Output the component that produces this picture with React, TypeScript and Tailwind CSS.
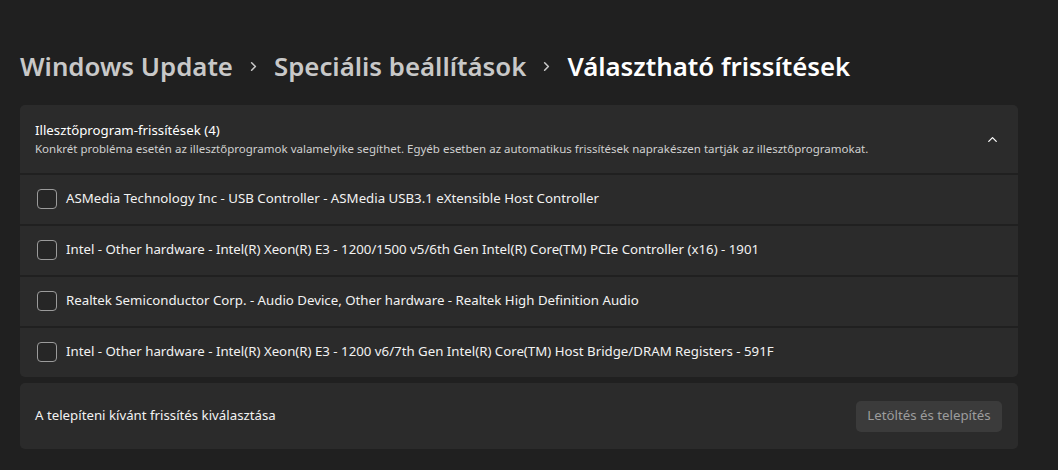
import { ChevronUp, ChevronRight } from "lucide-react";

const drivers = [
  "ASMedia Technology Inc - USB Controller - ASMedia USB3.1 eXtensible Host Controller",
  "Intel - Other hardware - Intel(R) Xeon(R) E3 - 1200/1500 v5/6th Gen Intel(R) Core(TM) PCIe Controller (x16) - 1901",
  "Realtek Semiconductor Corp. - Audio Device, Other hardware - Realtek High Definition Audio",
  "Intel - Other hardware - Intel(R) Xeon(R) E3 - 1200 v6/7th Gen Intel(R) Core(TM) Host Bridge/DRAM Registers - 591F",
];

function Checkbox() {
  return <div className="w-5 h-5 rounded-[4px] border border-[#9b9b9b] bg-[#262626] shrink-0" />;
}

export default function App() {
  return (
    <div
      className="w-[1058px] h-[470px] bg-[#202020] text-white overflow-hidden pl-5 pr-10"
      style={{ fontFamily: '"Noto Sans", "Open Sans", sans-serif' }}
    >
      <div className="flex items-center h-[40px] mt-[46px] text-[25.8px] font-semibold">
        <span className="text-[#c8c8c8]">Windows Update</span>
        <ChevronRight className="w-[15px] h-[15px] mx-[13px] text-[#c8c8c8]" strokeWidth={2.5} />
        <span className="text-[#c8c8c8]">Speciális beállítások</span>
        <ChevronRight className="w-[15px] h-[15px] mx-[13px] text-[#c8c8c8]" strokeWidth={2.5} />
        <span className="text-white">Választható frissítések</span>
      </div>

      <div className="mt-[19px] flex flex-col gap-[2px]">
        <div className="h-[68px] bg-[#2b2b2b] rounded-t-[5px] flex items-center pl-[15px] pr-[18px]">
          <div className="flex-1 flex flex-col">
            <span className="text-[13.25px] leading-[20px]">Illesztőprogram-frissítések (4)</span>
            <span className="text-[11.5px] leading-[18px] text-[#d0d0d0]">
              Konkrét probléma esetén az illesztőprogramok valamelyike segíthet. Egyéb esetben az automatikus frissítések naprakészen tartják az illesztőprogramokat.
            </span>
          </div>
          <ChevronUp className="w-[15px] h-[15px] text-white" strokeWidth={2} />
        </div>

        {drivers.map((d, i) => (
          <div
            key={i}
            className={`h-[49px] bg-[#2b2b2b] flex items-center gap-[9px] pl-[17px] pb-[1px] ${i === drivers.length - 1 ? "rounded-b-[5px]" : ""}`}
          >
            <Checkbox />
            <span className="text-[13.25px] text-[#f2f2f2]">{d}</span>
          </div>
        ))}
      </div>

      <div className="mt-[6px] h-[66px] bg-[#2b2b2b] rounded-[5px] flex items-center justify-between pl-[15px] pr-[16px]">
        <span className="text-[13.25px] text-[#f2f2f2]">A telepíteni kívánt frissítés kiválasztása</span>
        <button className="h-[31px] w-[146px] rounded-[5px] bg-[#3b3b3b] text-[#9d9d9d] text-[13.25px]">
          Letöltés és telepítés
        </button>
      </div>
    </div>
  );
}
